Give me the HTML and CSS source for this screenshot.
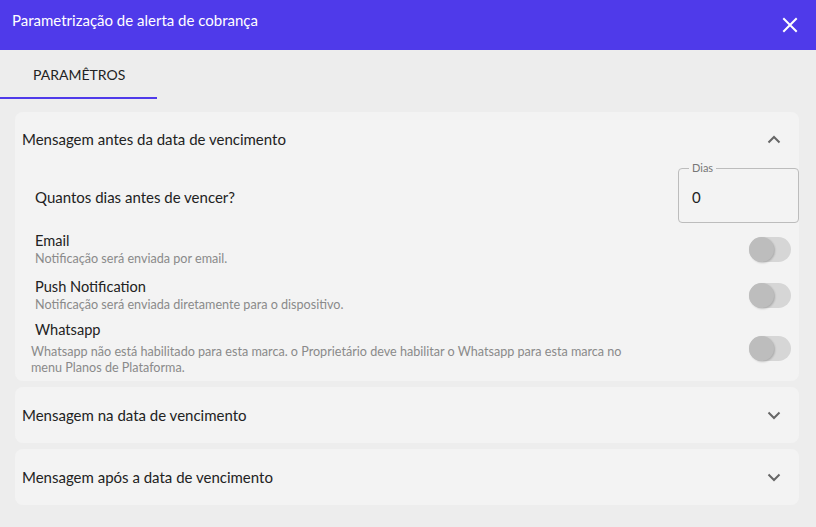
FILE: index.html
```html
<!DOCTYPE html>
<html lang="pt-BR">
<head>
  <meta charset="UTF-8">
  <meta name="viewport" content="width=device-width, initial-scale=1.0">
  <title>Parametrização de alerta de cobrança</title>
  <link rel="stylesheet" href="styles.css">
</head>
<body>

  <div class="cabecalho">
    <div class="titulo">Parametrização de alerta de cobrança</div>
    <button class="fechar" aria-label="Fechar">
      <svg width="16" height="16" viewBox="0 0 16 16">
        <path d="M2 2 L14 14 M14 2 L2 14" stroke="#fff" stroke-width="2" stroke-linecap="square"/>
      </svg>
    </button>
  </div>

  <div class="abas">
    <div class="aba ativa">PARAMÊTROS</div>
  </div>

  <div class="conteudo">

    <div class="painel">
      <div class="painel-topo">
        <span>Mensagem antes da data de vencimento</span>
        <svg class="seta" width="14" height="9" viewBox="0 0 14 9">
          <path d="M1.5 7.5 L7 2 L12.5 7.5" fill="none" stroke="#666" stroke-width="2"/>
        </svg>
      </div>
      <div class="painel-corpo">
        <div class="linha-dias">
          <div class="pergunta">Quantos dias antes de vencer?</div>
          <div class="campo">
            <span class="rotulo">Dias</span>
            <span class="valor">0</span>
          </div>
        </div>

        <div class="opcao">
          <div class="opcao-texto">
            <div class="opcao-nome">Email</div>
            <div class="opcao-desc">Notificação será enviada por email.</div>
          </div>
          <div class="chave"><span class="bolinha"></span></div>
        </div>

        <div class="opcao push">
          <div class="opcao-texto">
            <div class="opcao-nome">Push Notification</div>
            <div class="opcao-desc">Notificação será enviada diretamente para o dispositivo.</div>
          </div>
          <div class="chave"><span class="bolinha"></span></div>
        </div>

        <div class="opcao whatsapp">
          <div class="opcao-texto">
            <div class="opcao-nome">Whatsapp</div>
            <div class="opcao-desc aviso">Whatsapp não está habilitado para esta marca. o Proprietário deve habilitar o Whatsapp para esta marca no menu Planos de Plataforma.</div>
          </div>
          <div class="chave"><span class="bolinha"></span></div>
        </div>
      </div>
    </div>

    <div class="painel">
      <div class="painel-topo">
        <span>Mensagem na data de vencimento</span>
        <svg class="seta" width="14" height="9" viewBox="0 0 14 9">
          <path d="M1.5 1.5 L7 7 L12.5 1.5" fill="none" stroke="#666" stroke-width="2"/>
        </svg>
      </div>
    </div>

    <div class="painel">
      <div class="painel-topo">
        <span>Mensagem após a data de vencimento</span>
        <svg class="seta" width="14" height="9" viewBox="0 0 14 9">
          <path d="M1.5 1.5 L7 7 L12.5 1.5" fill="none" stroke="#666" stroke-width="2"/>
        </svg>
      </div>
    </div>

  </div>

</body>
</html>
```

FILE: styles.css
```css
body {
  font-family: Lato, "Noto Sans", sans-serif;
  background-color: #ededed;
  color: #222;
  margin: 0;
}
.cabecalho {
  height: 50px;
  background-color: #4f3aea;
  color: #fff;
  display: flex;
  align-items: center;
  justify-content: space-between;
  padding: 0 18px 0 12px;
  box-sizing: border-box;
}
.titulo {
  font-size: 15px;
  margin-top: -10px;
}
.fechar {
  background: none;
  border: none;
  padding: 0;
  width: 16px;
  height: 16px;
  cursor: pointer;
}
.abas {
  display: flex;
  height: 49px;
}
.aba {
  width: 157px;
  box-sizing: border-box;
  padding-left: 33px;
  padding-top: 16px;
  font-size: 14px;
  color: #222;
}
.aba.ativa {
  border-bottom: 2px solid #4f3aea;
}
.conteudo {
  padding: 13px 17px 0 15px;
  display: flex;
  flex-direction: column;
  gap: 6px;
}
.painel {
  background-color: #f3f3f3;
  border-radius: 8px;
}
.painel-topo {
  height: 56px;
  display: flex;
  align-items: center;
  justify-content: space-between;
  padding: 0 18px 0 7px;
  font-size: 15px;
}
.painel:first-child .painel-topo {
  height: 54px;
}
.painel-corpo {
  padding: 2px 0 5px 0;
}
.linha-dias {
  display: flex;
  align-items: center;
  justify-content: space-between;
}
.pergunta {
  font-size: 15px;
  padding-left: 20px;
  padding-top: 2px;
}
/* campo com contorno e rótulo sobre a borda */
.campo {
  width: 121px;
  height: 55px;
  box-sizing: border-box;
  padding: 0 13px;
  border: 1px solid #bcbcbc;
  border-radius: 4px;
  position: relative;
  display: flex;
  align-items: center;
}
.rotulo {
  position: absolute;
  top: -8px;
  left: 10px;
  font-size: 11px;
  color: #777;
  padding: 0 3px;
  background-color: #f3f3f3;
}
.valor {
  font-size: 15px;
  padding-top: 2px;
}
.opcao {
  display: flex;
  align-items: center;
  justify-content: space-between;
  padding: 0 8px 0 20px;
  margin-top: 8px;
}
.opcao.push {
  margin-top: 10px;
}
.opcao.whatsapp {
  margin-top: 7px;
}
.opcao-nome {
  font-size: 14.6px;
  line-height: 20px;
}
.opcao-desc {
  font-size: 12.6px;
  line-height: 16px;
  color: #8a8a8a;
}
.whatsapp .opcao-texto {
  margin-left: -4px;
}
.whatsapp .opcao-nome {
  padding-left: 4px;
}
.aviso {
  max-width: 615px;
  margin-top: 4px;
}
.chave {
  width: 42px;
  height: 25px;
  border-radius: 13px;
  background-color: #d6d6d6;
  flex-shrink: 0;
  position: relative;
}
.bolinha {
  position: absolute;
  left: 0;
  top: 0;
  width: 25px;
  height: 25px;
  border-radius: 50%;
  background-color: #bdbdbd;
  box-shadow: 1px 1px 2px rgba(0, 0, 0, 0.2);
}
.seta {
  display: block;
}
```
